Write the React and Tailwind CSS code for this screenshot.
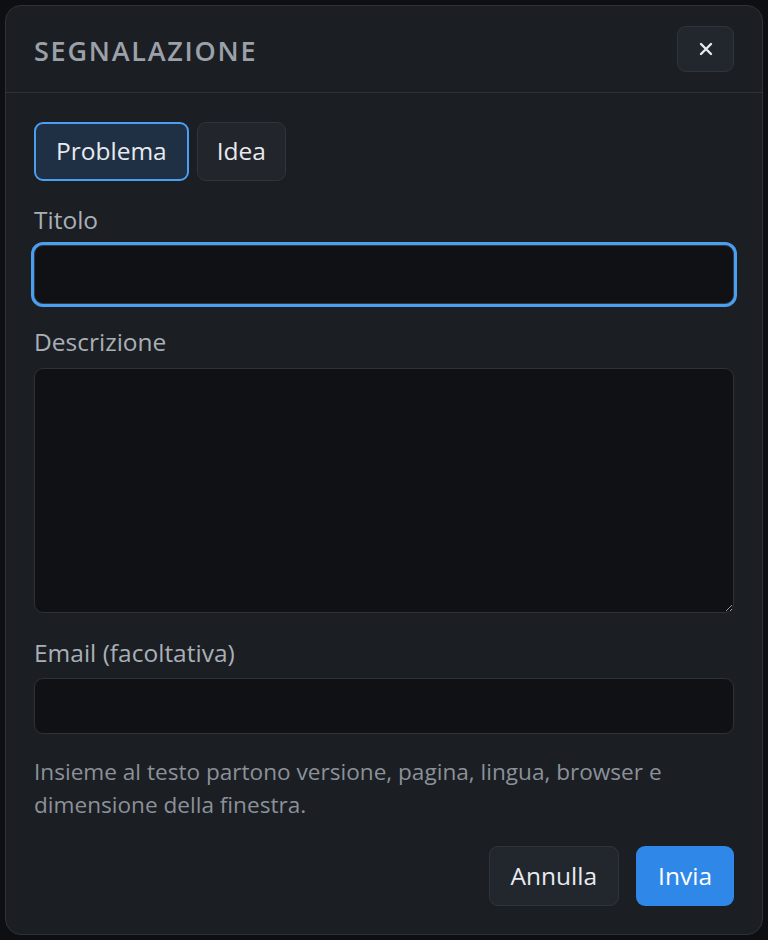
import React from "react";

export default function App() {
  const font = { fontFamily: '"Open Sans", "Noto Sans", sans-serif' };
  return (
    <div className="w-[768px] h-[940px] bg-[#0d0f13] p-[5px]" style={font}>
      <div className="w-[758px] h-[930px] bg-[#1b1e23] border border-[#2e3238] rounded-[16px] flex flex-col">
        <div className="h-[87px] border-b border-[#2e3238] flex items-center justify-between pl-[28px] pr-[28px]">
          <h2 className="text-[27px] font-semibold tracking-[0.065em] text-[#9ba1a9] leading-none mt-[2px]">SEGNALAZIONE</h2>
          <button className="w-[57px] h-[46px] rounded-[9px] bg-[#22262d] border border-[#30353d] flex items-center justify-center">
            <svg width="14" height="14" viewBox="0 0 14 14" fill="none" stroke="#e8eaed" strokeWidth="2.4" strokeLinecap="round">
              <path d="M2 2 L12 12 M12 2 L2 12" />
            </svg>
          </button>
        </div>
        <div className="flex-1 flex flex-col px-[28px] pt-[29px] pb-[28px]">
          <div className="flex gap-[8px]">
            <button className="h-[59px] px-[20px] rounded-[9px] bg-[#1f2f44] border-2 border-[#4a9ff0] text-[24.5px] text-[#e8eaed]">Problema</button>
            <button className="h-[59px] px-[19px] rounded-[9px] bg-[#22252b] border border-[#30343b] text-[24.5px] text-[#e8eaed]">Idea</button>
          </div>
          <label className="mt-[23px] text-[24.5px] leading-[32px] text-[#a9afb7]">Titolo</label>
          <div className="mt-[9px] h-[59px] rounded-[9px] bg-[#0f1115] border border-[#34383f] shadow-[0_0_0_3px_#4a9ff0]"></div>
          <label className="mt-[22px] text-[24.5px] leading-[32px] text-[#a9afb7]">Descrizione</label>
          <textarea className="mt-[10px] h-[245px] rounded-[9px] bg-[#0f1115] border border-[#2e3238] outline-none resize-y"></textarea>
          <label className="mt-[24px] text-[24.5px] leading-[32px] text-[#a9afb7]">Email (facoltativa)</label>
          <div className="mt-[9px] h-[56px] rounded-[9px] bg-[#0f1115] border border-[#2e3238]"></div>
          <p className="mt-[21px] text-[22.6px] leading-[33px] text-[#8b9199]">
            Insieme al testo partono versione, pagina, lingua, browser e dimensione della finestra.
          </p>
          <div className="mt-auto flex justify-end gap-[17px]">
            <button className="h-[60px] px-[21px] rounded-[9px] bg-[#22262d] border border-[#30353d] text-[24.5px] text-[#e8eaed]">Annulla</button>
            <button className="h-[60px] px-[22px] rounded-[9px] bg-[#2f87e8] text-[24.5px] text-white">Invia</button>
          </div>
        </div>
      </div>
    </div>
  );
}
